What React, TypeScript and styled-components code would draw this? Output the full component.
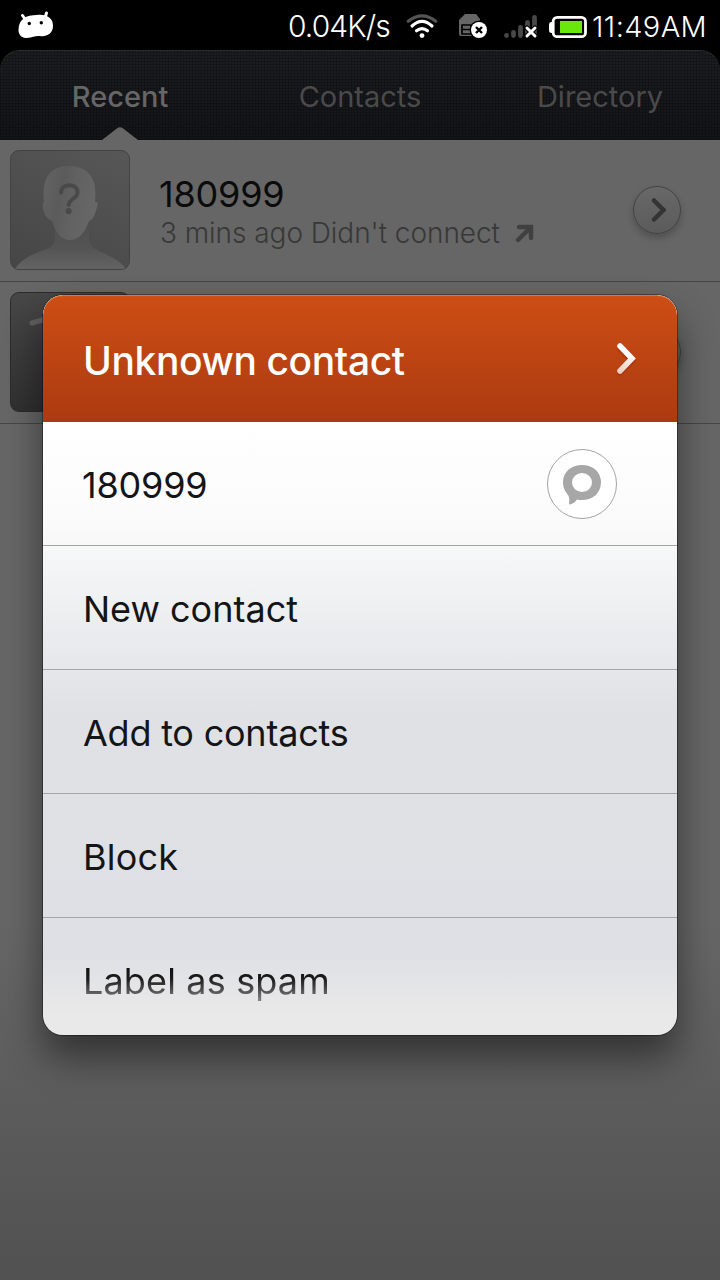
import React from 'react';
import styled, { createGlobalStyle } from 'styled-components';

const GlobalStyle = createGlobalStyle`
  * { box-sizing: border-box; }
  html, body { margin: 0; padding: 0; background: #000; }
  body { font-family: Inter, "Liberation Sans", sans-serif; }
`;

const Screen = styled.div`
  position: relative;
  width: 720px;
  height: 1280px;
  overflow: hidden;
  background: #000;
  display: flex;
  flex-direction: column;
`;

const StatusBar = styled.header`
  height: 50px;
  flex: none;
  display: flex;
  justify-content: space-between;
  align-items: flex-start;
  padding: 0 13px 0 17px;
  color: #fff;
`;

const StatusGroup = styled.div`
  display: flex;
  align-items: flex-start;
`;

const StatusText = styled.span<{ $width: number; $spacing: number; $size: number }>`
  width: ${(p) => p.$width}px;
  font-size: ${(p) => p.$size}px;
  letter-spacing: ${(p) => p.$spacing}px;
  font-weight: 300;
  line-height: 53px;
  white-space: nowrap;
`;

const Icon = styled.svg<{ $gap?: number }>`
  display: block;
  flex: none;
  margin-right: ${(p) => p.$gap ?? 0}px;
`;

const Tabs = styled.nav`
  height: 90px;
  flex: none;
  display: grid;
  grid-template-columns: repeat(3, 1fr);
  border-radius: 20px 20px 0 0;
  border-top: 1px solid #2b2c2e;
  background:
    repeating-linear-gradient(0deg, rgba(0, 0, 0, 0.2) 0 1px, transparent 1px 3px),
    repeating-linear-gradient(90deg, rgba(0, 0, 0, 0.2) 0 1px, transparent 1px 3px),
    linear-gradient(#1b1d20, #131417);
`;

const Tab = styled.div<{ $active?: boolean; $spacing: number }>`
  display: flex;
  flex-direction: column;
  align-items: center;
  justify-content: space-between;
  font-size: 29px;
  font-weight: ${(p) => (p.$active ? 500 : 400)};
  line-height: 36px;
  padding-top: 28px;
  letter-spacing: ${(p) => p.$spacing}px;
  color: ${(p) => (p.$active ? '#666' : '#4a4a4b')};
`;

const Calls = styled.main`
  flex: 1;
  background: linear-gradient(#666 0, #666 69%, #515152 100%);
`;

const CallRow = styled.div`
  height: 142px;
  display: flex;
  align-items: center;
  padding: 0 39px 1px 10px;
  border-bottom: 1px solid #464646;
`;

const Avatar = styled.div<{ $dark?: boolean }>`
  width: 120px;
  height: 120px;
  flex: none;
  overflow: hidden;
  border-radius: 9px;
  border: 1px solid ${(p) => (p.$dark ? '#2b2b2b' : '#434343')};
  background: ${(p) => (p.$dark ? 'linear-gradient(170deg, #484848, #2c2c2c)' : 'linear-gradient(30deg, #464646, #575757)')};
`;

const CallInfo = styled.div`
  flex: 1;
  padding: 4px 0 0 29px;
`;

const CallNumber = styled.div`
  font-size: 36px;
  line-height: 42px;
  letter-spacing: -0.2px;
  color: #0b0b0b;
`;

const CallDetail = styled.div`
  display: flex;
  align-items: center;
  gap: 15px;
  padding-left: 1px;
  font-size: 28px;
  font-weight: 300;
  line-height: 36px;
  letter-spacing: -0.05px;
  color: #383838;
`;

const RoundButton = styled.div`
  width: 48px;
  height: 48px;
  border-radius: 50%;
  border: 1px solid #434343;
  background: linear-gradient(#686868, #5b5b5b);
  box-shadow: 0 4px 7px rgba(0, 0, 0, 0.22);
  display: flex;
  align-items: center;
  justify-content: center;
`;

const Dialog = styled.section`
  position: absolute;
  left: 43px;
  top: 295px;
  width: 634px;
  height: 740px;
  border-radius: 20px;
  background: linear-gradient(#fff 127px, #fafafa 235px, #f4f5f6 270px, #dfe1e5 420px, #dfe0e5 660px, #e9e9e9 720px);
  box-shadow: 0 0 0 1px rgba(0, 0, 0, 0.35), 0 22px 38px rgba(0, 0, 0, 0.48);
`;

const DialogBody = styled.div`
  height: 100%;
  overflow: hidden;
  border-radius: 20px;
`;

const DialogHeader = styled.div`
  height: 127px;
  display: flex;
  align-items: center;
  justify-content: space-between;
  padding: 3px 39px 0 40px;
  border-radius: 20px 20px 0 0;
  box-shadow: inset 0 1px 1px rgba(255, 255, 255, 0.2), inset 0 1px 0 rgba(255, 255, 255, 0.06);
  background: linear-gradient(#cd4e15, #ac3a10);
  color: #fff;
  font-size: 39px;
  font-weight: 500;
  letter-spacing: -0.4px;
`;

const MenuRow = styled.div<{ $spacing: number }>`
  height: 124px;
  display: flex;
  align-items: center;
  justify-content: space-between;
  padding: 3px 60px 0 40px;
  border-bottom: 1px solid #a3a5a8;
  font-size: 36px;
  letter-spacing: ${(p) => p.$spacing}px;
  color: #141517;
`;

const PhoneNumber = styled.span`
  margin-left: -1px;
`;

const FadingLabel = styled.span`
  line-height: 50px;
  background: linear-gradient(#111 12px, #1c1c1c 23px, #888 46px);
  background-clip: text;
  color: transparent;
`;

const MessageButton = styled.div`
  width: 70px;
  height: 70px;
  margin-top: -3px;
  border: 1px solid #a3a3a3;
  border-radius: 50%;
  background: #fff;
  display: flex;
  align-items: center;
  justify-content: center;
`;

const Android = () => (
  <Icon width="38" height="40" viewBox="0 0 38 40">
    <g fill="#fff">
      <path d="M20 15C30 14 36 18 36 26C36 34 29 37 23 36C18 35.500 14 38 9 38C4 38 1.500 34 1.500 30C1.500 19 9 15 20 15Z" />
      <path d="M5.500 15.500L8 19M29.500 13L28 18" stroke="#fff" strokeWidth="3" strokeLinecap="round" />
    </g>
    <circle cx="12.300" cy="23.500" r="1.700" />
    <circle cx="24.300" cy="22.800" r="1.700" />
  </Icon>
);

const Wifi = () => (
  <Icon $gap={20} width="32" height="40" viewBox="0 0 32 40" fill="none" strokeWidth="3.100" strokeLinecap="round">
    <path d="M2.200 21.200Q16 10.500 29.800 21.200" stroke="#555" />
    <path d="M6 26Q16 16.600 26 26M10.500 30.800Q16 26.400 21.500 30.800" stroke="#fff" />
    <circle cx="16" cy="35.600" r="2.400" fill="#fff" />
  </Icon>
);

const Sim = () => (
  <Icon $gap={16} width="30" height="40" viewBox="0 0 30 40">
    <path d="M7 14H18L22 19V36H3Q1 36 1 34V20Z" fill="#666" />
    <path d="M4 25H13V34H4ZM4 29.500H12" fill="none" stroke="#000" strokeWidth="1.700" />
    <circle cx="21" cy="30" r="9.400" fill="#000" />
    <circle cx="21" cy="30" r="8" fill="#fff" />
    <path d="M18 27L24 33M24 27L18 33" stroke="#000" strokeWidth="2.400" />
  </Icon>
);

const Signal = () => (
  <Icon $gap={11} width="34" height="40" viewBox="0 0 34 40" strokeLinecap="round" fill="none">
    <path d="M2.500 35.500V35.600M9.500 32.500V35.500M16.500 27.500V35.500M23.500 22.500V35.500M30.500 17.500V35.500" stroke="#484848" strokeWidth="4.800" />
    <path d="M23 28L31 36M31 28L23 36" stroke="#000" strokeWidth="5" />
    <path d="M23 28L31 36M31 28L23 36" stroke="#fff" strokeWidth="3" />
  </Icon>
);

const Battery = () => (
  <Icon $gap={5} width="38" height="40" viewBox="0 0 38 40">
    <path d="M4 22H2.500Q0 22 0 25V30Q0 33 2.500 33H4Z" fill="#fff" />
    <rect x="4.200" y="17.300" width="32.300" height="19.400" rx="4" fill="none" stroke="#fff" strokeWidth="2.800" />
    <rect x="11" y="21" width="22" height="12" fill="#69e80d" />
  </Icon>
);

const Silhouette = () => (
  <Icon width="118" height="118" viewBox="0 0 118 118">
    <defs>
      <linearGradient id="skin" x2="1" y2="0.300">
        <stop offset="0" stopColor="#646464" />
        <stop offset="0.400" stopColor="#5b5b5b" />
        <stop offset="0.600" stopColor="#616161" />
        <stop offset="1" stopColor="#676767" />
      </linearGradient>
      <linearGradient id="torso" x2="0" y2="1">
        <stop offset="0" stopColor="#505050" />
        <stop offset="0.500" stopColor="#545454" />
        <stop offset="1" stopColor="#636363" />
      </linearGradient>
    </defs>
    <path d="M4 118C11 107 24 102 36 98Q44 95 44 87V75H78V88Q78 95 86 99C99 105 110 110 115 118Z" fill="url(#torso)" />
    <path d="M33 51C30 25 41 15 58 15C76 15 87 26 84 51Q88 50 86 56C84 63 83 68 78 70C73 83 67 89 59 89C50 89 44 81 41 70C35 68 33 62 32 57Q31 51 33 51Z" fill="url(#skin)" />
    <path d="M50 41.500C50 32 66.500 31.500 66.500 41.500C66.500 47.500 57.700 48 57.700 54" fill="none" stroke="#494949" strokeWidth="4" strokeLinecap="round" />
    <circle cx="57.600" cy="60" r="3.100" fill="#494949" />
  </Icon>
);

const RowChevron = () => (
  <Icon width="18" height="28" viewBox="0 0 18 28">
    <path d="M6 4.500L15.500 14L6 23.500" fill="none" stroke="#343434" strokeWidth="4.500" strokeLinecap="round" strokeLinejoin="miter" />
  </Icon>
);

export default function App() {
  return (
    <Screen>
      <GlobalStyle />
      <StatusBar>
        <Android />
        <StatusGroup>
          <StatusText $width={118} $spacing={-0.9} $size={30}>0.04K/s</StatusText>
          <Wifi />
          <Sim />
          <Signal />
          <Battery />
          <StatusText $width={115} $spacing={0.4} $size={29}>11:49AM</StatusText>
        </StatusGroup>
      </StatusBar>
      <Tabs>
        <Tab $active $spacing={0}>
          Recent
          <Icon width="36" height="13" viewBox="0 0 36 13">
            <path d="M0 13L15.500 1Q18 -0.500 20.500 1L36 13Z" fill="#666" />
          </Icon>
        </Tab>
        <Tab $spacing={0}>Contacts</Tab>
        <Tab $spacing={0}>Directory</Tab>
      </Tabs>
      <Calls>
        <CallRow>
          <Avatar><Silhouette /></Avatar>
          <CallInfo>
            <CallNumber>180999</CallNumber>
            <CallDetail>
              3 mins ago Didn't connect
              <Icon width="19" height="19" viewBox="0 0 19 19">
                <path d="M3 16L14 5M4 3H16V14" fill="none" stroke="#404040" strokeWidth="4.400" strokeLinecap="round" />
              </Icon>
            </CallDetail>
          </CallInfo>
          <RoundButton><RowChevron /></RoundButton>
        </CallRow>
        <CallRow>
          <Avatar $dark>
            <Icon width="118" height="118" viewBox="0 0 118 118">
              <path d="M21 30L38 25" stroke="#606060" strokeWidth="5" strokeLinecap="round" />
            </Icon>
          </Avatar>
          <CallInfo />
          <RoundButton><RowChevron /></RoundButton>
        </CallRow>
      </Calls>
      <Dialog>
        <DialogBody>
          <DialogHeader>
            Unknown contact
            <Icon width="24" height="36" viewBox="0 0 24 36">
              <defs>
                <linearGradient id="arrow" x1="0" y1="3" x2="0" y2="33" gradientUnits="userSpaceOnUse">
                  <stop offset="0.300" stopColor="#fff" />
                  <stop offset="1" stopColor="#e9c5b7" />
                </linearGradient>
              </defs>
              <path d="M6 6L18 18L6 30" transform="translate(0 1)" fill="none" stroke="#842808" strokeOpacity="0.300" strokeWidth="6" strokeLinecap="round" />
              <path d="M6 4L18 16.500L6 29" fill="none" stroke="url(#arrow)" strokeWidth="5.500" strokeLinecap="round" />
            </Icon>
          </DialogHeader>
          <MenuRow $spacing={-0.2}>
            <PhoneNumber>180999</PhoneNumber>
            <MessageButton>
              <Icon width="40" height="42" viewBox="0 0 40 42">
                <path fillRule="evenodd" fill="#a7a7a7" d="M20 2C31 2 39 9 39 19C39 30 31 37 20 37Q17 37 15 36.500Q12 41 7 41.500Q8 35 6 32C3 28 1 25 1 19C1 9 9 2 20 2ZM20 10A10 9.500 0 1 0 20 29A10 9.500 0 1 0 20 10Z" />
              </Icon>
            </MessageButton>
          </MenuRow>
          <MenuRow $spacing={0}>New contact</MenuRow>
          <MenuRow $spacing={-0.22}>Add to contacts</MenuRow>
          <MenuRow $spacing={0.2}>Block</MenuRow>
          <MenuRow $spacing={0.15}><FadingLabel>Label as spam</FadingLabel></MenuRow>
        </DialogBody>
      </Dialog>
    </Screen>
  );
}
